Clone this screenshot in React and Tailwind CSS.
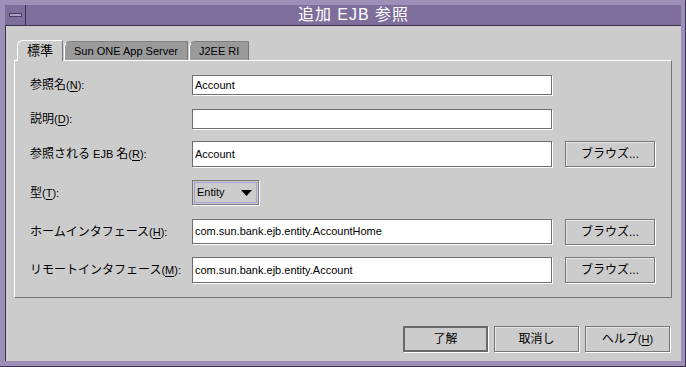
import React from "react";

const FONT = { fontFamily: '"Liberation Sans", "Noto Sans CJK JP", sans-serif' };

function Field({ value, h = "h-[20px]" }) {
  return (
    <div
      className={`w-[360px] ${h} bg-white border border-[#6e6e6e] shadow-[1px_1px_0_#ffffff] flex items-center pl-[2px] text-[11px] text-black`}
    >
      {value}
    </div>
  );
}

function Btn({ children, w = "w-[90px]", h = "h-[26px]", strong }) {
  return (
    <div
      className={`${w} ${h} flex items-center justify-center text-[12px] text-black bg-[#cccccc] ${
        strong
          ? "border-2 border-[#6a6a6a] shadow-[1px_1px_0_#ffffff]"
          : "border border-[#777777] shadow-[1px_1px_0_#ffffff,inset_1px_1px_0_#e6e6e6]"
      }`}
    >
      {children}
    </div>
  );
}

function L({ children }) {
  return <span className="text-[11px]">{children}</span>;
}

function U({ c }) {
  return <span className="underline underline-offset-2">{c}</span>;
}

function Label({ children }) {
  return <div className="w-[162px] text-[12px] text-black whitespace-nowrap">{children}</div>;
}

export default function App() {
  return (
    <div
      style={FONT}
      className="w-[686px] h-[367px] bg-[#9d90b8] pt-[5px] pl-[5px] pr-[4px] pb-[5px] flex flex-col border-r border-b border-[#3b3150]"
    >
      <div className="h-[21px] flex bg-[#7e6e9b] border-b border-[#3b3150]">
        <div className="w-[21px] h-full border-r border-[#3b3150] flex items-center justify-center">
          <div className="w-[13px] h-[4px] bg-[#a99dc4] border border-[#4a3f60]" />
        </div>
        <div className="flex-1 flex items-center justify-center text-white text-[16px] tracking-[1px]">
          追加 EJB 参照
        </div>
      </div>

      <div className="flex-1 bg-[#cccccc] flex flex-col border-l border-[#3b3150]">
        <div className="ml-[8px] mt-[14px] w-[658px]">
          <div className="flex items-end pl-[3px] h-[20px]">
            <div className="h-[21px] w-[46px] bg-[#cccccc] border-t border-l border-[#ffffff] border-r border-r-[#777777] rounded-tl-[6px] flex items-center justify-center text-[13px] text-black relative z-10 -mb-[1px]">
              標準
            </div>
            <div className="h-[19px] w-[124px] ml-[1px] bg-[#9a9a9a] border-t border-[#808080] border-l border-l-[#ffffff] border-r border-r-[#777777] rounded-tl-[6px] flex items-center justify-center text-[11px] text-black">
              Sun ONE App Server
            </div>
            <div className="h-[19px] w-[60px] ml-[1px] bg-[#9a9a9a] border-t border-[#808080] border-l border-l-[#ffffff] border-r border-r-[#777777] rounded-tl-[6px] flex items-center pl-[9px] text-[11px] text-black">
              J2EE RI
            </div>
          </div>
          <div className="h-[238px] border-t border-l border-[#ffffff] border-r border-b border-r-[#777777] border-b-[#777777] pl-[15px] flex flex-col">
            <div className="flex items-center h-[20px] mt-[14px]">
              <Label>
                参照名<L>(<U c="N" />):</L>
              </Label>
              <Field value="Account" />
            </div>
            <div className="flex items-center h-[20px] mt-[14px]">
              <Label>
                説明<L>(<U c="D" />):</L>
              </Label>
              <Field value="" />
            </div>
            <div className="flex items-center h-[26px] mt-[12px]">
              <Label>
                参照される<L> EJB </L>名<L>(<U c="R" />):</L>
              </Label>
              <Field value="Account" h="h-[26px]" />
              <div className="ml-[13px]">
                <Btn>ブラウズ...</Btn>
              </div>
            </div>
            <div className="flex items-center h-[25px] mt-[13px]">
              <Label>
                型<L>(<U c="T" />):</L>
              </Label>
              <div className="w-[67px] h-[25px] border border-[#777777] shadow-[1px_1px_0_#ffffff] p-[1px]">
                <div className="w-full h-full border border-[#a9a2d8] flex items-center pl-[2px] pr-[4px] text-[11px] text-black">
                  <span className="flex-1">Entity</span>
                  <svg width="11" height="6" viewBox="0 0 11 6">
                    <path d="M0 0 H11 L5.5 6 Z" fill="#000" />
                  </svg>
                </div>
              </div>
            </div>
            <div className="flex items-center h-[25px] mt-[14px]">
              <Label>
                ホームインタフェース<L>(<U c="H" />):</L>
              </Label>
              <Field value="com.sun.bank.ejb.entity.AccountHome" h="h-[25px]" />
              <div className="ml-[13px]">
                <Btn>ブラウズ...</Btn>
              </div>
            </div>
            <div className="flex items-center h-[26px] mt-[13px]">
              <Label>
                リモートインタフェース<L>(<U c="M" />):</L>
              </Label>
              <Field value="com.sun.bank.ejb.entity.Account" h="h-[26px]" />
              <div className="ml-[13px]">
                <Btn>ブラウズ...</Btn>
              </div>
            </div>
          </div>
        </div>

        <div className="flex justify-end gap-[6px] mt-[28px] pr-[11px]">
          <Btn w="w-[85px]" strong>
            了解
          </Btn>
          <Btn w="w-[85px]">取消し</Btn>
          <Btn w="w-[85px]">
            ヘルプ<L>(<U c="H" />)</L>
          </Btn>
        </div>
      </div>
    </div>
  );
}
